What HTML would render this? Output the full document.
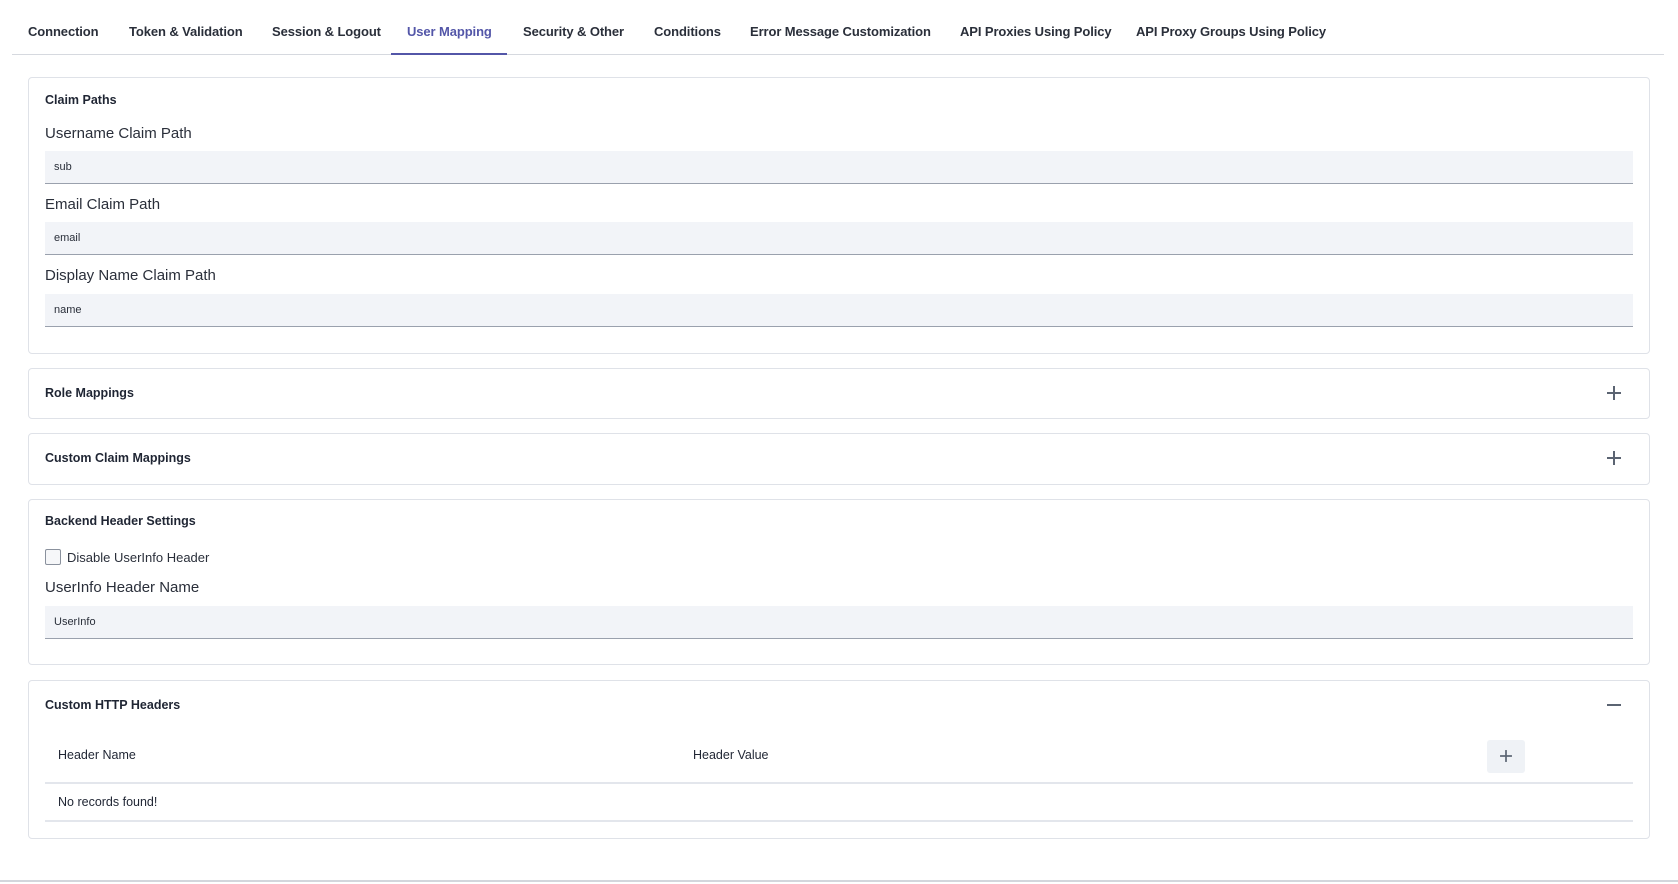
<!DOCTYPE html>
<html><head><meta charset="utf-8"><style>
*{box-sizing:border-box;margin:0;padding:0}
body{width:1678px;height:884px;background:#fff;font-family:"Liberation Sans",Arial,sans-serif;color:#1f2533;position:relative;overflow:hidden}
.a{position:absolute}
.tab{position:absolute;top:24px;font-size:13px;font-weight:bold;color:#2a2f3a;white-space:nowrap;letter-spacing:-0.1px}
.card{position:absolute;left:28px;width:1622px;border:1px solid #dfe2e8;border-radius:4px;background:#fff}
.title{position:absolute;left:16px;font-size:12.5px;font-weight:bold;color:#1f2533}
.lbl{position:absolute;left:45px;font-size:15px;color:#2a2f3a}
.inp{position:absolute;left:45px;width:1588px;height:33px;background:#f2f4f8;border-bottom:1px solid #9aa1ad;font-size:11px;color:#2a2f3a;padding:10px 0 0 9px}
.plus{position:absolute;width:14px;height:14px}
.plus:before{content:"";position:absolute;left:0;top:6.3px;width:14px;height:1.4px;background:#5b6472}
.plus.p:after{content:"";position:absolute;left:6.3px;top:0;width:1.4px;height:14px;background:#5b6472}
.line{position:absolute;left:45px;width:1588px;height:2px;background:#e3e6ec}
.td{position:absolute;font-size:12.5px;color:#1f2533}
</style></head><body>
<div class="tab" style="left:28px">Connection</div>
<div class="tab" style="left:129px">Token &amp; Validation</div>
<div class="tab" style="left:272px">Session &amp; Logout</div>
<div class="tab" style="left:407px;color:#5356a8">User Mapping</div>
<div class="tab" style="left:523px">Security &amp; Other</div>
<div class="tab" style="left:654px">Conditions</div>
<div class="tab" style="left:750px">Error Message Customization</div>
<div class="tab" style="left:960px">API Proxies Using Policy</div>
<div class="tab" style="left:1136px">API Proxy Groups Using Policy</div>
<div class="a" style="left:12px;top:54px;width:1652px;height:1px;background:#d6d9df"></div>
<div class="a" style="left:391px;top:53px;width:116px;height:2px;background:#5356a8"></div>

<div class="card" style="top:77px;height:277px"><div class="title" style="top:15px">Claim Paths</div></div>
<div class="lbl" style="top:125px">Username Claim Path</div>
<div class="inp" style="top:151px">sub</div>
<div class="lbl" style="top:196px">Email Claim Path</div>
<div class="inp" style="top:222px">email</div>
<div class="lbl" style="top:267px">Display Name Claim Path</div>
<div class="inp" style="top:294px">name</div>

<div class="card" style="top:368px;height:51px"><div class="title" style="top:17px">Role Mappings</div></div>
<div class="plus p" style="left:1607px;top:386px"></div>
<div class="card" style="top:433px;height:52px"><div class="title" style="top:17px">Custom Claim Mappings</div></div>
<div class="plus p" style="left:1607px;top:451px"></div>

<div class="card" style="top:499px;height:166px"><div class="title" style="top:14px">Backend Header Settings</div></div>
<div class="a" style="left:45px;top:549px;width:16px;height:16px;border:1.5px solid #8a919d;border-radius:2px;background:#f6f7f9"></div>
<div class="a" style="left:67px;top:550px;font-size:13px;color:#2a2f3a">Disable UserInfo Header</div>
<div class="lbl" style="top:579px">UserInfo Header Name</div>
<div class="inp" style="top:606px">UserInfo</div>

<div class="card" style="top:680px;height:159px"><div class="title" style="top:17px">Custom HTTP Headers</div></div>
<div class="plus" style="left:1607px;top:698px"></div>
<div class="td" style="left:58px;top:748px">Header Name</div>
<div class="td" style="left:693px;top:748px">Header Value</div>
<div class="a" style="left:1487px;top:740px;width:38px;height:33px;background:#eff2f6;border-radius:3px"></div>
<div class="plus p" style="left:1499px;top:749px;transform:scale(0.85)"></div>
<div class="line" style="top:782px"></div>
<div class="td" style="left:58px;top:795px">No records found!</div>
<div class="line" style="top:820px"></div>

<div class="a" style="left:0;top:880px;width:1678px;height:2px;background:#d3d6dc"></div>
</body></html>
